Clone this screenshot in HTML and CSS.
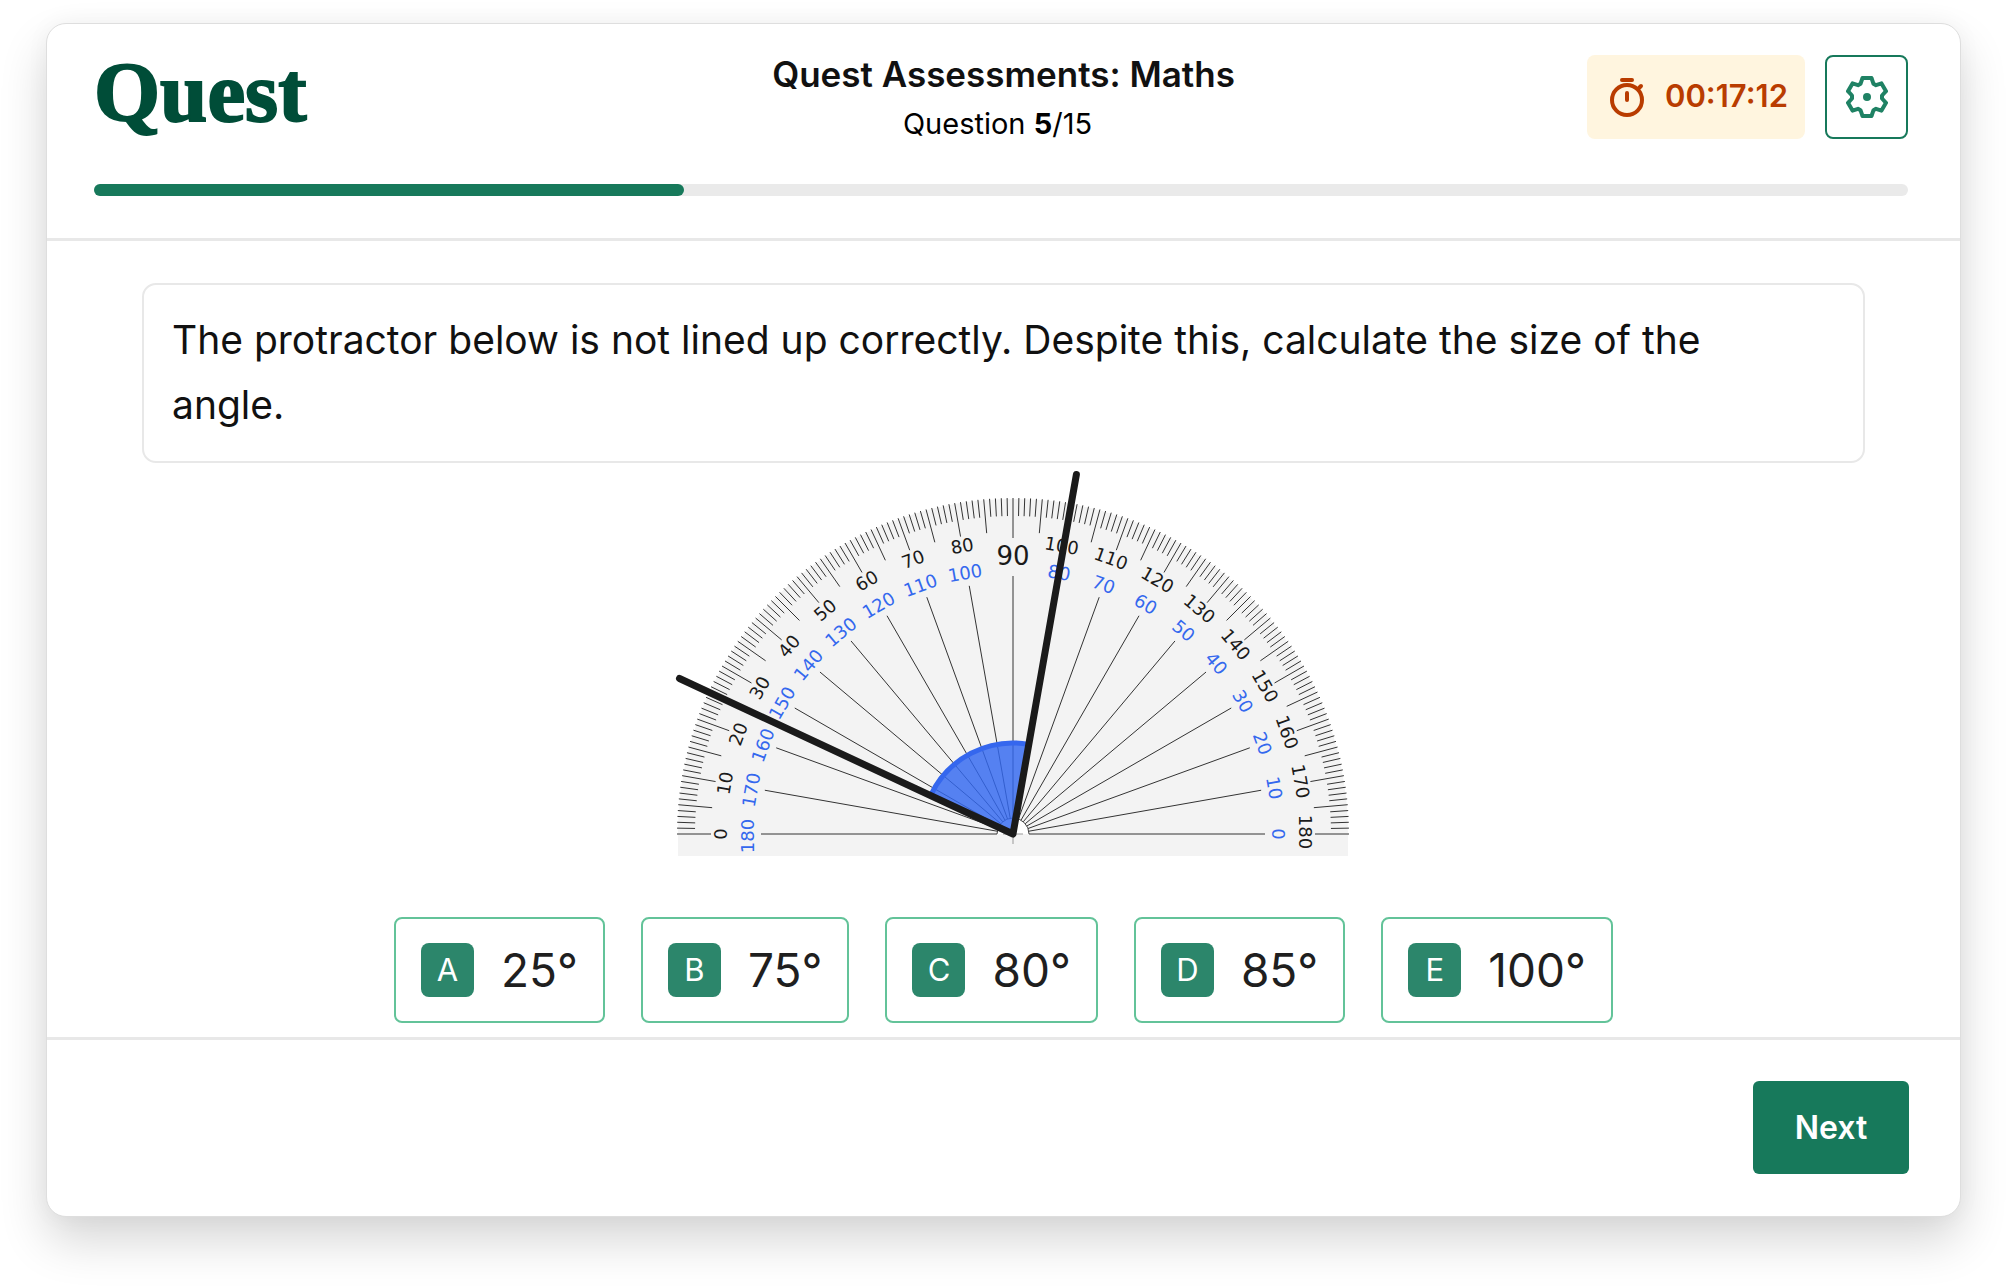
FILE: index.html
```html
<!DOCTYPE html>
<html lang="en">
<head>
    <meta charset="UTF-8">
    <meta name="viewport" content="width=device-width, initial-scale=1.0">
    <title>Quest Assessments: Maths</title>
    <link rel="stylesheet" href="styles.css">
</head>
<body>
    <main class="card">
        <header class="card-header">
            <div class="header-row">
                <a href="#" class="logo">Quest</a>
                <div class="heading">
                    <h1>Quest Assessments: Maths</h1>
                    <p class="counter">Question <strong>5</strong>/15</p>
                </div>
                <div class="tools">
                    <div class="timer">
                        <svg class="timer-icon" viewBox="0 0 34 40" aria-hidden="true">
                            <circle cx="17" cy="23" r="15"/>
                            <path d="M12 3h10M17 16v7M29 11l2-2"/>
                        </svg>
                        <span>00:17:12</span>
                    </div>
                    <button type="button" class="settings-btn" aria-label="Settings">
                        <svg class="gear-icon" viewBox="-21 -21 42 42" aria-hidden="true">
                            <path d="M-4.5 -19H4.5L6.5 -13.2L9 -11.8L14.5 -13.6L19 -5.8L15 -1.5V1.5L19 5.8L14.5 13.6L9 11.8L6.5 13.2L4.5 19H-4.5L-6.5 13.2L-9 11.8L-14.5 13.6L-19 5.8L-15 1.5V-1.5L-19 -5.8L-14.5 -13.6L-9 -11.8L-6.5 -13.2Z"/>
                            <circle cx="0" cy="0" r="4"/>
                        </svg>
                    </button>
                </div>
            </div>
            <div class="progress" role="progressbar" aria-valuemin="0" aria-valuemax="15" aria-valuenow="5" aria-label="Progress">
                <div class="progress-fill" style="width: 32.5%"></div>
            </div>
        </header>

        <section class="content">
            <p class="question">The protractor below is not lined up correctly. Despite this, calculate the size of the angle.</p>

            <div class="figure">
                <svg class="protractor" viewBox="-340 -366 680 390" role="img" aria-label="Protractor">
                    <path class="body" d="M-335 22V0A335 335 0 0 1 335 0V22Z"/>
                    <path class="hub" d="M-16 0A16 16 0 0 1 16 0"/>
                    <path class="cross" d="M-10 0H10M0 -10V10"/>
                    <g id="ticks"></g>
                    <g id="labels"></g>
                    <path class="sector" id="sector"/>
                    <path class="sector-edge" id="sectorEdge"/>
                    <path class="arms" id="arms"/>
                </svg>
            </div>

            <div class="options">
                <button type="button" class="option"><span class="key">A</span>25°</button>
                <button type="button" class="option"><span class="key">B</span>75°</button>
                <button type="button" class="option"><span class="key">C</span>80°</button>
                <button type="button" class="option"><span class="key">D</span>85°</button>
                <button type="button" class="option"><span class="key">E</span>100°</button>
            </div>
        </section>

        <footer class="card-footer">
            <button type="button" class="next-btn">Next</button>
        </footer>
    </main>

    <script src="script.js"></script>
</body>
</html>
```

FILE: styles.css
```css
* {
    box-sizing: border-box;
}
body {
    margin: 0;
    padding: 23px 46px 69px;
    background: #fff;
    color: #111;
    font-family: Inter, "Liberation Sans", sans-serif;
}
button {
    font-family: inherit;
    cursor: pointer;
}
.card {
    border: 1px solid #dedede;
    border-radius: 20px;
    background: #fff;
    box-shadow: 0 24px 48px rgba(0, 0, 0, 0.16), 0 0 24px rgba(0, 0, 0, 0.04);
}

/* header */
.card-header {
    padding: 31px 52px 42px 47px;
    border-bottom: 3px solid #e8e8e8;
}
.header-row {
    display: grid;
    grid-template-columns: 1fr auto 1fr;
    grid-template-rows: 84px;
    margin-bottom: 45px;
}
.logo {
    color: #004d38;
    font-family: "Liberation Serif", serif;
    font-size: 85px;
    font-weight: bold;
    line-height: 74px;
    text-decoration: none;
    -webkit-text-stroke: 2px #004d38;
}
.heading {
    padding-left: 5px;
    text-align: center;
}
h1 {
    margin: 0;
    font-size: 35px;
    font-weight: 600;
    line-height: 38px;
}
.counter {
    margin: 14px 0 0;
    padding-right: 12px;
    color: #000;
    font-size: 29px;
    line-height: 34px;
}
.tools {
    display: flex;
    justify-content: flex-end;
    gap: 20px;
}
.timer {
    display: flex;
    align-items: center;
    gap: 21px;
    padding: 0 17px 4px 23px;
    border-radius: 8px;
    background: #fff5df;
    color: #b93c00;
    font-size: 31px;
    font-weight: 600;
}
.timer-icon {
    width: 34px;
    height: 40px;
    margin-top: 4px;
    fill: none;
    stroke: #b93c00;
    stroke-width: 4;
    stroke-linecap: round;
}
.settings-btn {
    display: flex;
    align-items: center;
    justify-content: center;
    width: 83px;
    padding: 0;
    border: 2px solid #17795b;
    border-radius: 8px;
    background: #fff;
}
.gear-icon {
    width: 42px;
    height: 42px;
    fill: none;
    stroke: #1f8264;
    stroke-width: 4;
    stroke-linejoin: round;
}
.gear-icon circle {
    fill: #1f8264;
    stroke: none;
}
.progress {
    height: 12px;
    border-radius: 6px;
    background: #eaeaea;
}
.progress-fill {
    height: 100%;
    border-radius: 6px;
    background: #17795b;
}

/* question */
.content {
    padding: 42px 95px 14px;
}
.question {
    margin: 0;
    padding: 22px 48px 24px 28px;
    border: 2px solid #e8e8e8;
    border-radius: 14px;
    font-size: 39px;
    line-height: 65px;
}
.figure {
    padding: 5px 0 0 18px;
}
.protractor {
    display: block;
    width: 680px;
    height: 390px;
    margin: 0 auto;
}
.body {
    fill: #f3f3f3;
}
.hub {
    fill: #fff;
    stroke: #444;
}
.cross {
    stroke: #999;
}
.tick {
    stroke: #333;
}
.outer,
.inner {
    fill: #1a1a1a;
    font-family: "DejaVu Sans", sans-serif;
    font-size: 18px;
    text-anchor: middle;
}
.inner {
    fill: #3468ee;
}
.big {
    font-size: 26px;
}
.sector {
    fill: rgba(50, 104, 240, 0.82);
}
.sector-edge {
    fill: none;
    stroke: #3567ee;
    stroke-width: 5;
}
.arms {
    fill: none;
    stroke: #1a1a1a;
    stroke-width: 7;
    stroke-linecap: round;
    stroke-linejoin: round;
}

/* answers */
.options {
    display: flex;
    justify-content: center;
    gap: 36px;
    margin-top: 59px;
}
.option {
    display: flex;
    align-items: center;
    gap: 27px;
    height: 106px;
    padding: 0 25px;
    border: 2px solid #63c399;
    border-radius: 8px;
    background: #fff;
    color: #1f1f1f;
    font-size: 46px;
}
.key {
    width: 53px;
    border-radius: 8px;
    background: #2c866b;
    color: #fff;
    font-size: 31px;
    line-height: 54px;
}

/* footer */
.card-footer {
    display: flex;
    justify-content: flex-end;
    padding: 41px 51px 42px;
    border-top: 3px solid #e8e8e8;
}
.next-btn {
    width: 156px;
    height: 93px;
    border: 0;
    border-radius: 6px;
    background: #17795b;
    color: #fff;
    font-size: 32px;
    font-weight: 600;
}
```

FILE: script.js
```js
const SVG_NS = 'http://www.w3.org/2000/svg';
const ticks = document.getElementById('ticks');
const labels = document.getElementById('labels');

// degrees are counted clockwise from the left end of the baseline
function point(deg, radius) {
    const rad = deg * Math.PI / 180;
    return [-Math.cos(rad) * radius, -Math.sin(rad) * radius];
}

function addTick(deg, from, to) {
    const line = document.createElementNS(SVG_NS, 'line');
    const [x1, y1] = point(deg, from);
    const [x2, y2] = point(deg, to);
    line.setAttribute('x1', x1);
    line.setAttribute('y1', y1);
    line.setAttribute('x2', x2);
    line.setAttribute('y2', y2);
    line.setAttribute('class', 'tick');
    ticks.appendChild(line);
}

function addLabel(deg, radius, value, className) {
    const text = document.createElementNS(SVG_NS, 'text');
    // three digits start with a narrow 1, so pull them back a little
    text.setAttribute('x', value >= 100 ? -2 : 0);
    text.setAttribute('y', -radius);
    text.setAttribute('transform', `rotate(${deg - 90})`);
    text.setAttribute('class', className);
    text.textContent = value;
    labels.appendChild(text);
}

for (let deg = 0; deg <= 180; deg++) {
    addTick(deg, deg % 5 === 0 ? 302 : 318, 336);
}

for (let deg = 0; deg <= 180; deg += 10) {
    if (deg === 90) {
        addTick(deg, 296, 302);
        addTick(deg, 16, 258);
        addLabel(deg, 269, 90, 'outer big');
    } else {
        addTick(deg, 16, 252);
        addLabel(deg, 286, deg, 'outer');
        addLabel(deg, 259, 180 - deg, 'inner');
    }
}

// the measured angle
const start = 25;
const end = 100;
const edgeStart = point(start, 91);
const edgeEnd = point(end, 91);
const arc = `A91 91 0 0 1 ${edgeEnd}`;
document.getElementById('sector').setAttribute('d', `M0 0L${edgeStart}${arc}Z`);
document.getElementById('sectorEdge').setAttribute('d', `M${edgeStart}${arc}`);
document.getElementById('arms').setAttribute('d', `M${point(start, 368)}L0 0L${point(end, 365)}`);
```
